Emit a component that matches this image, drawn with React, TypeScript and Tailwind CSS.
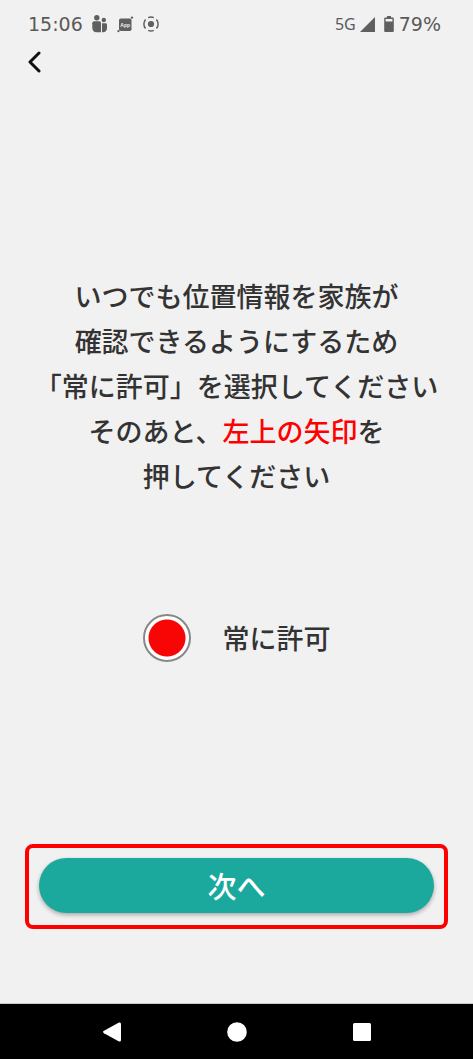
import { useState } from 'react'

function FamilyIcon() {
  return (
    <svg width="16" height="18" viewBox="0 0 16 18" fill="#5f5f5f" aria-hidden="true">
      <circle cx="4.800" cy="2.800" r="2.700" />
      <circle cx="11.800" cy="5" r="2.200" />
      <path d="M2 6.200H7.500Q9 6.200 9 7.700V17.300H4.500Q.3 17 .3 12.500V8.200Q.3 6.200 2 6.200Z" />
      <path d="M10 8.200H13.600Q15 8.200 15 9.600V13Q15 17 10.800 17.300H10Z" />
    </svg>
  )
}

function AppIcon() {
  return (
    <svg width="17" height="17" viewBox="0 0 17 17" fill="#5f5f5f" aria-hidden="true">
      <rect x="2" y="2.500" width="12.500" height="12.500" rx="1.800" />
      <circle cx="15" cy="1.600" r="1.200" />
      <circle cx="1.400" cy="15.200" r="1.100" />
      <text x="8.200" y="10.600" textAnchor="middle" fontSize="5" fontWeight="700" fill="#f1f1f1" className="font-['Liberation_Sans',sans-serif]">
        App
      </text>
    </svg>
  )
}

function RecordIcon() {
  return (
    <svg width="16" height="16" viewBox="0 0 16 16" aria-hidden="true">
      <circle cx="8" cy="8" r="3.100" fill="#5f5f5f" />
      <g fill="none" stroke="#5f5f5f" strokeWidth="1.500">
        <path d="M5.200 1.600A7 7 0 0 1 10.800 1.600M5.200 14.400A7 7 0 0 0 10.800 14.400" />
        <path d="M2.600 3.400A7 7 0 0 0 2.600 12.600M13.400 3.400A7 7 0 0 1 13.400 12.600" />
      </g>
    </svg>
  )
}

function StatusBar() {
  return (
    <div className="flex h-12 items-center justify-between pl-7 pr-8 text-[19px] text-[#5a5a5a] font-['DejaVu_Sans',sans-serif]">
      <div className="flex items-center gap-[9px]">
        <span>15:06</span>
        <FamilyIcon />
        <AppIcon />
        <RecordIcon />
      </div>
      <div className="flex items-center gap-1">
        <span className="text-base font-['Noto_Sans',sans-serif]">5G</span>
        <svg width="15" height="15" viewBox="0 0 15 15" fill="#5f5f5f" aria-hidden="true">
          <path d="M15 0V15H0Z" />
        </svg>
        <svg className="ml-1" width="12" height="16" viewBox="0 0 12 16" aria-hidden="true">
          <path d="M4 0h4v1.500h1.800q1 0 1 1V15q0 1-1 1H2.200q-1 0-1-1V2.500q0-1 1-1H4Z" fill="#5f5f5f" />
          <path d="M2.600 3h6.800v2.500h-6.800Z" fill="#f1f1f1" />
        </svg>
        <span>79%</span>
      </div>
    </div>
  )
}

function NavBar() {
  return (
    <nav className="flex h-14 items-center justify-center gap-[105px] border-t border-[#c8c8c8] bg-black">
      <button type="button" aria-label="戻る">
        <svg width="20" height="20" viewBox="0 0 20 20" fill="#fff">
          <path d="M17 .5Q19 0 19 2V18Q19 20 17 19.500L2 11.200Q0 10 2 8.800Z" />
        </svg>
      </button>
      <button type="button" aria-label="ホーム">
        <svg width="20" height="20" viewBox="0 0 20 20" fill="#fff">
          <circle cx="10" cy="10" r="9.800" />
        </svg>
      </button>
      <button type="button" aria-label="最近のアプリ">
        <svg width="20" height="20" viewBox="0 0 20 20" fill="#fff">
          <rect x="1" y="1" width="18" height="18" rx="1.500" />
        </svg>
      </button>
    </nav>
  )
}

export default function App() {
  const [permission, setPermission] = useState('always')

  return (
    <div className="flex min-h-screen flex-col bg-[#f1f1f1] text-[#333] font-['Noto_Sans_CJK_JP',sans-serif]">
      <StatusBar />

      <header className="flex h-7 items-center px-6">
        <button type="button" aria-label="前の画面へ" className="p-1">
          <svg width="13" height="22" viewBox="0 0 13 22" fill="none" stroke="#111" strokeWidth="3" strokeLinecap="round" strokeLinejoin="round">
            <path d="M11 2L2 11L11 20" />
          </svg>
        </button>
      </header>

      <main className="flex flex-1 flex-col items-center justify-end px-[25px] pb-[74px]">
        <p className="text-center text-[27px] font-medium leading-[45px] whitespace-nowrap">
          いつでも位置情報を家族が
          <br />
          確認できるようにするため
          <br />
          「常に許可」を選択してください
          <br />
          そのあと、<span className="text-[#ff0000]">左上の矢印</span>を
          <br />
          押してください
        </p>

        <label className="mt-[116px] flex items-center gap-8 text-[27px] font-medium leading-[48px]">
          <input
            type="radio"
            name="permission"
            value="always"
            checked={permission === 'always'}
            onChange={e => setPermission(e.target.value)}
            className="size-12 appearance-none rounded-full border-2 border-[#888] bg-white bg-clip-padding p-1 checked:bg-[radial-gradient(circle,#f80606_18px,#fff_19px)]"
          />
          常に許可
        </label>

        {/* highlighted tap area */}
        <div className="mt-[182px] w-full rounded-lg border-4 border-[#ff0000] px-[10px] pt-[10px] pb-3">
          <button
            type="button"
            className="h-[55px] w-full rounded-full bg-[#1ba99d] text-[29px] font-medium leading-[55px] text-white shadow-[0_2px_4px_rgba(0,0,0,0.3)]"
          >
            次へ
          </button>
        </div>
      </main>

      <NavBar />
    </div>
  )
}
